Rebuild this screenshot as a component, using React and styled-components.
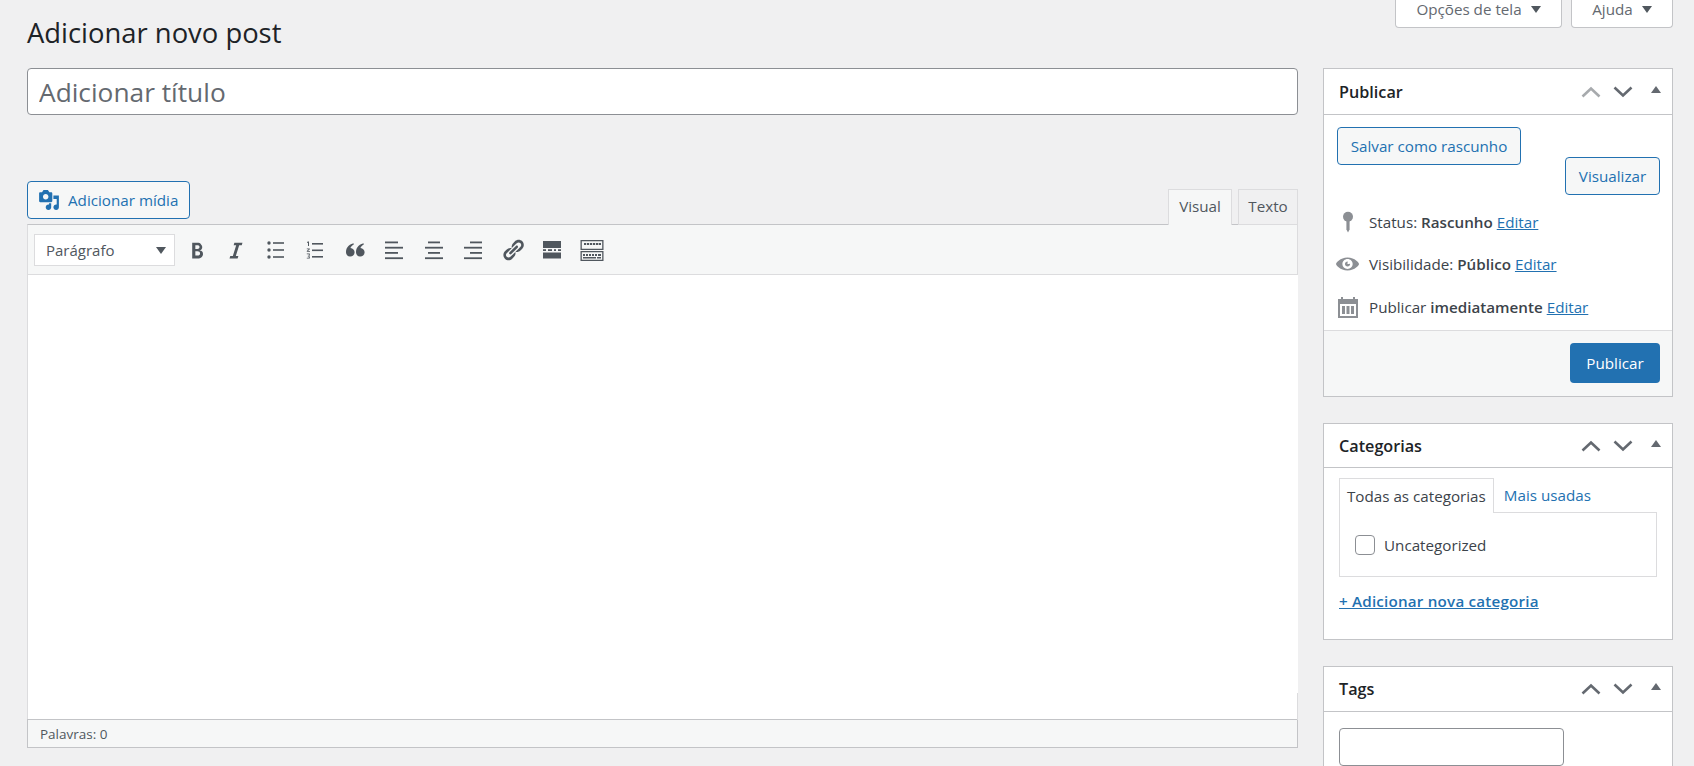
import React from "react";
import styled, { createGlobalStyle } from "styled-components";

const Global = createGlobalStyle`
  html, body { margin: 0; padding: 0; background: #f0f0f1; overflow: hidden; }
  * { box-sizing: border-box; }
  body { font-family: "Open Sans", "Noto Sans", "Liberation Sans", sans-serif; font-size: 15.2px; color: #3c434a; }
`;

const Page = styled.div`
  width: 1694px;
  height: 766px;
  overflow: hidden;
  padding: 0 21px 0 27px;
`;
const TopBar = styled.header`
  height: 68px;
  display: flex;
  justify-content: space-between;
  align-items: flex-start;
`;
const Heading = styled.h1`
  margin: 15px 0 0;
  font-size: 27.4px;
  line-height: 36px;
  font-weight: 400;
  color: #1d2327;
`;
const MetaLinks = styled.div`
  display: flex;
  gap: 9px;
`;
const MetaButton = styled.div`
  width: ${(p) => p.$w}px;
  height: 28px;
  background: #fff;
  border: 1px solid #c3c4c7;
  border-top: 0;
  border-radius: 0 0 4px 4px;
  display: flex;
  align-items: center;
  justify-content: center;
  gap: 9px;
  padding-bottom: 9px;
  color: #646970;
`;
const Caret = styled.span`
  width: 0;
  height: 0;
  border-left: 5px solid transparent;
  border-right: 5px solid transparent;
  border-top: 7px solid #50575e;
  margin-top: 1px;
`;
const Columns = styled.div`
  display: grid;
  grid-template-columns: 1271px 350px;
  column-gap: 25px;
  align-items: start;
`;
const MainColumn = styled.main`
  min-width: 0;
`;
const TitleInput = styled.input`
  display: block;
  width: 100%;
  height: 47px;
  padding: 0 11px;
  border: 1px solid #8c8f94;
  border-radius: 4px;
  background: #fff;
  font: 400 26.3px "Open Sans", sans-serif;
  outline: none;
  &::placeholder { color: #646970; opacity: 1; }
`;
const EditorTools = styled.div`
  margin-top: 66px;
  height: 43px;
  display: flex;
  justify-content: space-between;
  align-items: flex-start;
`;
const MediaButton = styled.div`
  width: 163px;
  height: 38px;
  display: flex;
  align-items: center;
  gap: 8px;
  padding-left: 10px;
  border: 1px solid #2271b1;
  border-radius: 4px;
  background: #f6f7f7;
  color: #2271b1;
  svg { width: 22px; height: 22px; fill: #2271b1; }
`;
const ModeTabs = styled.div`
  display: flex;
  gap: 6px;
  margin-top: 8px;
`;
const ModeTab = styled.div`
  width: ${(p) => p.$w}px;
  height: 36px;
  padding-bottom: 3px;
  display: flex;
  align-items: center;
  justify-content: center;
  border: 1px solid #dcdcde;
  border-bottom: ${(p) => (p.$active ? "0" : "1px solid #dcdcde")};
  background: ${(p) => (p.$active ? "#f6f7f7" : "#f0f0f1")};
  color: #50575e;
  position: relative;
  z-index: 1;
`;
const Toolbar = styled.div`
  height: 51px;
  display: flex;
  align-items: center;
  padding-left: 6px;
  background: #f6f7f7;
  border-top: 1px solid #c3c4c7;
  border-left: 1px solid #dcdcde;
  border-right: 1px solid #dcdcde;
  border-bottom: 1px solid #dcdcde;
`;
const FormatSelect = styled.div`
  width: 141px;
  height: 32px;
  margin-right: 2px;
  padding: 0 8px 0 11px;
  display: flex;
  align-items: center;
  justify-content: space-between;
  background: #fff;
  border: 1px solid #dcdcde;
  color: #50575e;
  font-size: 15px;
  flex: none;
`;
const ToolIcon = styled.div`
  width: 39.5px;
  flex: none;
  display: flex;
  justify-content: center;
  svg { display: block; width: 24px; height: 24px; fill: #50575e; }
`;
const EditArea = styled.div`
  height: 444px;
  background: #fff;
  border-left: 1px solid #dcdcde;
`;
const StatusBar = styled.div`
  position: relative;
  height: 29px;
  padding-left: 12px;
  display: flex;
  align-items: center;
  background: #f6f7f7;
  border: 1px solid #c3c4c7;
  font-size: 13.5px;
  color: #50575e;
  &::before {
    content: "";
    position: absolute;
    right: -1px;
    bottom: 100%;
    height: 27px;
    width: 1px;
    background: #dcdcde;
  }
`;
const Sidebar = styled.aside`
  display: flex;
  flex-direction: column;
  gap: 26px;
`;
const Box = styled.section`
  background: #fff;
  border: 1px solid #c3c4c7;
`;
const BoxHeader = styled.div`
  height: ${(p) => p.$h}px;
  display: flex;
  align-items: center;
  padding: 0 11px 0 15px;
  border-bottom: 1px solid #c3c4c7;
`;
const BoxTitle = styled.h2`
  margin: 0;
  flex: 1;
  font-size: 16.2px;
  font-weight: 600;
  color: #1d2327;
`;
const Handle = styled.svg`
  display: block;
  width: 32px;
  height: 14px;
  fill: none;
  stroke: ${(p) => (p.$dim ? "#a7aaad" : "#646970")};
  stroke-width: 2.6;
`;
const Triangle = styled.span`
  width: 0;
  height: 0;
  margin: 0 0 5px 12px;
  border-left: 5px solid transparent;
  border-right: 5px solid transparent;
  border-bottom: 7px solid #646970;
`;
const PublishActions = styled.div`
  height: 86px;
  padding: 12px 12px 0 13px;
  display: flex;
  justify-content: space-between;
  align-items: flex-start;
`;
const OutlineButton = styled.div`
  width: ${(p) => p.$w}px;
  height: 38px;
  margin-top: ${(p) => p.$top || 0}px;
  display: flex;
  align-items: center;
  justify-content: center;
  background: #f6f7f7;
  border: 1px solid #2271b1;
  border-radius: 4px;
  color: #2271b1;
`;
const MiscRow = styled.div`
  height: 42px;
  display: flex;
  align-items: center;
  padding-left: 12px;
  gap: 9px;
  color: #3c434a;
  b { font-weight: 600; }
  a { color: #2271b1; text-decoration: underline; }
  &:last-child { height: 43px; }
`;
const MiscIcon = styled.svg`
  width: 24px;
  height: 24px;
  flex: none;
  fill: #8c8f94;
`;
const MiscGroup = styled.div`
  padding-bottom: 2px;
`;
const MajorActions = styled.div`
  padding: 12px 12px 13px;
  display: flex;
  justify-content: flex-end;
  background: #f6f7f7;
  border-top: 1px solid #dcdcde;
`;
const PrimaryButton = styled.div`
  width: 90px;
  height: 40px;
  display: flex;
  align-items: center;
  justify-content: center;
  background: #2271b1;
  border-radius: 4px;
  color: #fff;
`;
const CategoryBody = styled.div`
  padding: 10px 15px 0;
  height: 171px;
`;
const CatTabs = styled.div`
  display: flex;
  height: 34px;
`;
const CatTab = styled.div`
  height: ${(p) => (p.$active ? "35px" : "34px")};
  padding: 0 ${(p) => (p.$active ? "7px" : "10px")};
  display: flex;
  align-items: center;
  color: ${(p) => (p.$active ? "#3c434a" : "#2271b1")};
  background: #fff;
  position: relative;
  z-index: 1;
  ${(p) => p.$active && "border: 1px solid #dcdcde; border-bottom: 0;"}
`;
const CatPanel = styled.div`
  height: 65px;
  display: flex;
  align-items: center;
  gap: 9px;
  padding-left: 15px;
  border: 1px solid #dcdcde;
`;
const CheckBox = styled.span`
  width: 20px;
  height: 20px;
  border: 1px solid #8c8f94;
  border-radius: 4px;
  background: #fff;
`;
const AddLink = styled.a`
  display: block;
  margin-top: 14px;
  font-weight: 600;
  letter-spacing: 0.2px;
  color: #2271b1;
  text-decoration: underline;
`;
const TagsBody = styled.div`
  padding: 16px 15px 30px;
`;
const TagInput = styled.input`
  display: block;
  width: 225px;
  height: 38px;
  border: 1px solid #8c8f94;
  border-radius: 4px;
  background: #fff;
  outline: none;
`;

const Chevrons = ({ dim }) => (
  <>
    <Handle $dim={dim} viewBox="0 0 32 14">
      <path d="M7.5 11.5 16 3.5l8.5 8" />
    </Handle>
    <Handle viewBox="0 0 32 14">
      <path d="M7.5 2.5 16 10.5l8.5-8" />
    </Handle>
    <Triangle />
  </>
);

const Lines = ({ items }) => (
  <svg viewBox="0 0 24 24">
    {items.map(([x, y, w, h = 1.8], i) => (
      <rect key={i} x={x} y={y} width={w} height={h} />
    ))}
  </svg>
);

const ToolbarIcons = () => (
  <>
    <ToolIcon>
      <svg viewBox="0 0 20 20">
        <path d="M6 4v13h4.54c1.37 0 2.46-.33 3.26-1 .8-.66 1.2-1.58 1.2-2.77 0-.84-.23-1.51-.69-2.01-.46-.5-1.12-.8-1.97-.9v-.07c.64-.12 1.13-.41 1.5-.87.36-.47.54-1.06.54-1.78 0-1-.33-1.76-1-2.27C12.7 4.1 11.7 4 10.4 4H6zm2.62 2.1h1.53c1.3 0 1.95.5 1.95 1.5 0 .5-.16.88-.47 1.15-.31.26-.75.4-1.32.4H8.62V6.1zm0 4.94h1.75c.7 0 1.24.16 1.61.47.37.31.55.75.55 1.31 0 .6-.18 1.05-.56 1.36-.37.3-.9.46-1.6.46H8.62v-3.6z" />
      </svg>
    </ToolIcon>
    <ToolIcon>
      <svg viewBox="0 0 20 20">
        <path d="M14.78 6h-2.13l-2.8 9h2.12l-.62 2H4.6l.62-2h2.14l2.8-9H8.03l.62-2h6.75z" />
      </svg>
    </ToolIcon>
    <ToolIcon>
      <svg viewBox="0 0 24 24">
        <circle cx="5" cy="5" r="1.7" />
        <circle cx="5" cy="12" r="1.7" />
        <circle cx="5" cy="19" r="1.7" />
        <rect x="9" y="4.2" width="11" height="1.6" />
        <rect x="9" y="11.2" width="11" height="1.6" />
        <rect x="9" y="18.2" width="11" height="1.6" />
      </svg>
    </ToolIcon>
    <ToolIcon>
      <svg viewBox="0 0 24 24">
        <rect x="9" y="5" width="11" height="1.6" />
        <rect x="9" y="11.5" width="11" height="1.6" />
        <rect x="9" y="18" width="11" height="1.6" />
        <path d="M5 3.5h1V8H5V4.6l-1 .3v-.8zM3.8 10.5h3v.8L5 13h2v.8H3.8V13l1.9-1.7H3.8zM3.8 15.5h3v2l-1 .5 1 .5v2h-3v-.8h2v-1.2h-1v-.8h1v-1.4h-2z" />
      </svg>
    </ToolIcon>
    <ToolIcon>
      <svg viewBox="0 0 24 24">
        <path d="M10.5 5.2C7 6.2 3 8.8 3 14a4.3 4.3 0 1 0 4.5-4C7.8 8.8 9 7.4 10.8 6.5zM20.5 5.2C17 6.2 13 8.8 13 14a4.3 4.3 0 1 0 4.5-4c.3-1.2 1.5-2.6 3.3-3.5z" />
      </svg>
    </ToolIcon>
    <ToolIcon>
      <Lines items={[[3, 3.5, 13], [3, 8.8, 18], [3, 14, 13], [3, 19.3, 18]]} />
    </ToolIcon>
    <ToolIcon>
      <Lines items={[[6, 3.5, 12], [3, 8.8, 18], [6, 14, 12], [3, 19.3, 18]]} />
    </ToolIcon>
    <ToolIcon>
      <Lines items={[[9, 3.5, 12], [3, 8.8, 18], [9, 14, 12], [3, 19.3, 18]]} />
    </ToolIcon>
    <ToolIcon>
      <svg viewBox="0 0 20 20">
        <path d="M17.74 2.76c1.68 1.69 1.68 4.41 0 6.1l-1.53 1.52c-1.12 1.12-2.7 1.47-4.14 1.09l2.62-2.61.76-.77.76-.76c.84-.84.84-2.2 0-3.04-.84-.85-2.2-.85-3.04 0l-.77.76-3.38 3.38c-.37-1.44-.02-3.02 1.1-4.14l1.52-1.53c1.69-1.68 4.42-1.68 6.1 0zM8.59 13.43l5.34-5.34c.42-.42.42-1.1 0-1.52-.44-.43-1.13-.39-1.53 0l-5.33 5.34c-.42.42-.42 1.1 0 1.52.44.43 1.13.39 1.52 0zm-.76 2.29l4.14-4.15c.38 1.44.03 3.02-1.09 4.14l-1.52 1.53c-1.69 1.68-4.41 1.68-6.1 0-1.68-1.68-1.68-4.42 0-6.1l1.53-1.52c1.12-1.12 2.7-1.47 4.14-1.1l-4.14 4.15c-.85.84-.85 2.2 0 3.05.84.84 2.2.84 3.04 0z" />
      </svg>
    </ToolIcon>
    <ToolIcon>
      <Lines items={[[3, 3, 18, 7], [3, 11.2, 3], [8, 11.2, 4], [14, 11.2, 2], [18, 11.2, 3], [3, 14.5, 18, 6]]} />
    </ToolIcon>
    <ToolIcon>
      <svg viewBox="0 0 24 24">
        <path fillRule="evenodd" d="M.5 2h23v10H.5zM1.8 3.2v7.6h20.4V3.2zM.5 13h23v10H.5zM1.8 14.2v7.6h20.4v-7.6zM4 5h2.2v2H4zM7 5h2.2v2H7zM10 5h2.2v2H10zM13 5h2.2v2H13zM16 5h2.2v2H16zM18.8 5H21v2h-2.2zM3 16h2v2H3zM6 16h2v2H6zM9 16h2v2H9zM12 16h2v2h-2zM15 16h2v2h-2zM18 16h3v2h-3zM3 19h13v1.5H3zM17 19h4v1.5h-4z" />
      </svg>
    </ToolIcon>
  </>
);

export default function App() {
  return (
    <Page>
      <Global />
      <TopBar>
        <Heading>Adicionar novo post</Heading>
        <MetaLinks>
          <MetaButton $w={167}>
            Opções de tela <Caret />
          </MetaButton>
          <MetaButton $w={102}>
            Ajuda <Caret />
          </MetaButton>
        </MetaLinks>
      </TopBar>
      <Columns>
        <MainColumn>
          <TitleInput placeholder="Adicionar título" />
          <EditorTools>
            <MediaButton>
              <svg viewBox="0 0 20 20">
                <path d="M13 11V4c0-.55-.45-1-1-1h-1.67L9 1H5L3.67 3H2c-.55 0-1 .45-1 1v7c0 .55.45 1 1 1h10c.55 0 1-.45 1-1zM7 4.5c1.38 0 2.5 1.12 2.5 2.5S8.38 9.5 7 9.5 4.5 8.38 4.5 7 5.62 4.5 7 4.5zM14 6h5v10.5c0 1.38-1.12 2.5-2.5 2.5S14 17.88 14 16.5s1.12-2.5 2.5-2.5c.17 0 .34.02.5.05V9h-3V6zm-4 8.05V13h2v3.5c0 1.38-1.12 2.5-2.5 2.5S7 17.88 7 16.5 8.12 14 9.5 14c.17 0 .34.02.5.05z" />
              </svg>
              Adicionar mídia
            </MediaButton>
            <ModeTabs>
              <ModeTab $active $w={64}>Visual</ModeTab>
              <ModeTab $w={60}>Texto</ModeTab>
            </ModeTabs>
          </EditorTools>
          <Toolbar>
            <FormatSelect>
              Parágrafo <Caret />
            </FormatSelect>
            <ToolbarIcons />
          </Toolbar>
          <EditArea />
          <StatusBar>Palavras: 0</StatusBar>
        </MainColumn>
        <Sidebar>
          <Box>
            <BoxHeader $h={46}>
              <BoxTitle>Publicar</BoxTitle>
              <Chevrons dim />
            </BoxHeader>
            <PublishActions>
              <OutlineButton $w={184}>Salvar como rascunho</OutlineButton>
              <OutlineButton $w={95} $top={30}>Visualizar</OutlineButton>
            </PublishActions>
            <MiscGroup>
              <MiscRow>
                <MiscIcon viewBox="0 0 24 24">
                  <circle cx="12" cy="6.8" r="5" />
                  <path d="M10.4 9h3.2v10.5l-1.6 3-1.6-3z" />
                </MiscIcon>
                <span>Status: <b>Rascunho</b> <a>Editar</a></span>
              </MiscRow>
              <MiscRow>
                <MiscIcon viewBox="0 0 20.8 20" >
                  <path d="M10 4.4C3.439 4.4 0 9.232 0 10c0 .766 3.439 5.6 10 5.6 6.56 0 10-4.834 10-5.6 0-.768-3.44-5.6-10-5.6zm0 9.907c-2.455 0-4.445-1.928-4.445-4.307S7.545 5.691 10 5.691s4.444 1.93 4.444 4.309-1.989 4.307-4.444 4.307zM10 10c-.407-.447.663-2.154 0-2.154-1.228 0-2.223.965-2.223 2.154s.995 2.154 2.223 2.154c1.227 0 2.223-.965 2.223-2.154 0-.547-1.877.379-2.223 0z" />
                </MiscIcon>
                <span>Visibilidade: <b>Público</b> <a>Editar</a></span>
              </MiscRow>
              <MiscRow>
                <MiscIcon viewBox="0 0 24 24">
                  <path fillRule="evenodd" d="M2 4h3V2h2v2h10V2h2v2h3v19H2zM4 9v12h16V9zM6 11h3v8H6zM10.5 11h3v8h-3zM15 11h3v8h-3z" />
                </MiscIcon>
                <span>Publicar <b>imediatamente</b> <a>Editar</a></span>
              </MiscRow>
            </MiscGroup>
            <MajorActions>
              <PrimaryButton>Publicar</PrimaryButton>
            </MajorActions>
          </Box>
          <Box>
            <BoxHeader $h={44}>
              <BoxTitle>Categorias</BoxTitle>
              <Chevrons />
            </BoxHeader>
            <CategoryBody>
              <CatTabs>
                <CatTab $active>Todas as categorias</CatTab>
                <CatTab>Mais usadas</CatTab>
              </CatTabs>
              <CatPanel>
                <CheckBox />
                Uncategorized
              </CatPanel>
              <AddLink>+ Adicionar nova categoria</AddLink>
            </CategoryBody>
          </Box>
          <Box>
            <BoxHeader $h={45}>
              <BoxTitle>Tags</BoxTitle>
              <Chevrons />
            </BoxHeader>
            <TagsBody>
              <TagInput />
            </TagsBody>
          </Box>
        </Sidebar>
      </Columns>
    </Page>
  );
}
